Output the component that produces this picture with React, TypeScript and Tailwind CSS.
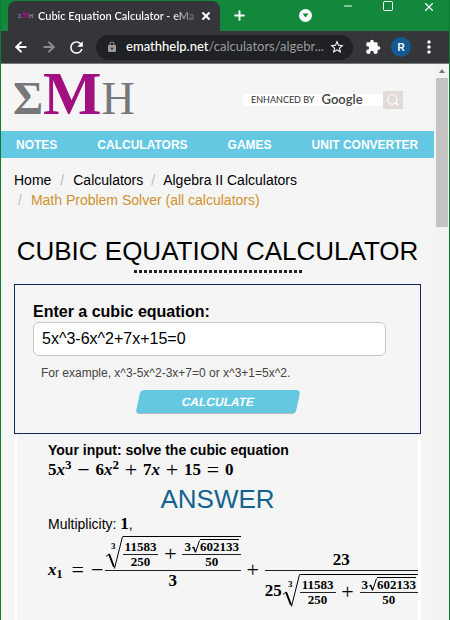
import { type ReactNode } from "react";
import { ArrowLeft, ArrowRight, Minus, Plus, Search, Square, X } from "lucide-react";
import { MdExtension, MdLock, MdMoreVert, MdRefresh, MdStarBorder } from "react-icons/md";

const NAV_LINKS = ["NOTES", "CALCULATORS", "GAMES", "UNIT CONVERTER"];

function TabStrip() {
  return (
    <div className="flex h-[31px] bg-[#13883d] pl-[7px] text-white">
      <div className="mt-px flex w-[212px] items-center rounded-t-lg bg-[#35363a] pl-[10px] pr-2">
        <span className="w-5 font-['Liberation_Serif'] text-[6px] text-gray-400">
          Σ<b className="text-[8px] text-[#a3107e]">M</b>H
        </span>
        <span className="flex-1 whitespace-nowrap bg-linear-to-r from-white from-85% to-[#55565a] bg-clip-text font-['Lato'] text-[11px] font-semibold text-transparent">
          Cubic Equation Calculator - eMa
        </span>
        <button aria-label="Close tab" className="ml-1">
          <X size={12} strokeWidth={4} />
        </button>
      </div>
      <button aria-label="New tab" className="ml-3">
        <Plus size={15} strokeWidth={3} />
      </button>
      <div className="ml-auto flex items-start gap-7">
        <button aria-label="Search tabs" className="mt-[9px] mr-[2px]">
          <svg width="13" height="13" viewBox="0 0 13 13">
            <circle cx="6.5" cy="6.5" r="6.5" fill="white" />
            <path d="M3.5 4.5h6l-3 4z" fill="#13883d" />
          </svg>
        </button>
        <button aria-label="Minimize">
          <Minus size={12} strokeWidth={2} />
        </button>
        <button aria-label="Maximize">
          <Square size={12} strokeWidth={2} />
        </button>
        <button aria-label="Close window" className="mr-[13px]">
          <X size={14} strokeWidth={2} />
        </button>
      </div>
    </div>
  );
}

function Toolbar() {
  return (
    <div className="flex h-[33px] items-center border-b border-[#77777b] bg-[#35363a] pl-3 text-white">
      <button aria-label="Back">
        <ArrowLeft size={16} strokeWidth={3} />
      </button>
      <button aria-label="Forward" className="ml-3 text-[#8c8d90]">
        <ArrowRight size={16} strokeWidth={3} />
      </button>
      <button aria-label="Reload" className="ml-[10px]">
        <MdRefresh size={19} />
      </button>
      <div className="ml-[10px] flex h-[25px] min-w-0 flex-1 items-center rounded-full bg-[#202124] pl-[10px] pr-2">
        <MdLock size={12} className="shrink-0 text-[#9a9b9e]" />
        <span className="ml-2 flex-1 whitespace-nowrap font-['Lato'] text-[13px] text-[#9a9b9e]">
          <span className="font-medium text-white">emathhelp.net</span>/calculators/algebr...
        </span>
        <button aria-label="Bookmark">
          <MdStarBorder size={16} />
        </button>
      </div>
      <button aria-label="Extensions" className="ml-3">
        <MdExtension size={16} />
      </button>
      <button
        aria-label="Profile"
        className="ml-[10px] size-5 rounded-full bg-[#14598f] font-['Liberation_Sans'] text-[10px] font-bold"
      >
        R
      </button>
      <button aria-label="Menu" className="ml-2 mr-[10px]">
        <MdMoreVert size={20} />
      </button>
    </div>
  );
}

function Scrollbar() {
  return (
    <div className="flex w-[15px] flex-col items-center bg-[#f3f3f3]">
      <svg width="8" height="14" viewBox="0 0 8 14">
        <path d="M1 9h6l-3-4z" fill="#777" />
      </svg>
      <div className="h-[149px] w-[12px] bg-[#c4c3c2]" />
    </div>
  );
}

function SiteHeader() {
  return (
    <header>
      <div className="flex h-[67px] items-center justify-between pl-3 pr-[31px]">
        <a href="#" className="flex items-baseline pb-[10px] font-['Liberation_Serif'] text-[#77777c]">
          <b className="text-[46px] leading-none">Σ</b>
          <b className="text-[62px] leading-none text-[#a01080]">M</b>
          <span className="text-[46px] leading-none">H</span>
        </a>
        <form className="mt-1 flex items-center font-['Lato']">
          <label
            htmlFor="site-search"
            className="flex h-3 w-[140px] items-center gap-[7px] bg-white pl-2 text-[9px] text-[#333]"
          >
            ENHANCED BY <span className="text-[13px] font-semibold text-[#444]">Google</span>
          </label>
          <button
            id="site-search"
            type="button"
            aria-label="Search"
            className="flex h-[18px] w-5 items-center justify-center bg-[#e2dbd7] text-white"
          >
            <Search size={14} strokeWidth={2} />
          </button>
        </form>
      </div>
      <nav className="flex h-[27px] items-center gap-10 whitespace-nowrap bg-[#64c8e3] px-[15px] text-xs font-bold text-white">
        {NAV_LINKS.map((label) => (
          <a key={label} href="#">
            {label}
          </a>
        ))}
      </nav>
    </header>
  );
}

function Breadcrumbs() {
  return (
    <nav className="mt-3 flex flex-wrap text-sm leading-[20px]">
      <a href="#">Home</a>
      <span className="px-[9px] text-[#bbb]">/</span>
      <a href="#">Calculators</a>
      <span className="px-2 text-[#bbb]">/</span>
      <a href="#">Algebra II Calculators</a>
      <span className="basis-full" />
      <span className="pl-1 pr-[9px] text-[#bbb]">/</span>
      <a href="#" className="text-[#cf922f]">
        Math Problem Solver (all calculators)
      </a>
    </nav>
  );
}

function CalculatorForm() {
  return (
    <form className="mt-[11px] h-[150px] border border-[#14285a] px-[18px] pt-[17px]">
      <label htmlFor="equation" className="block text-base leading-[20px] font-bold">
        Enter a cubic equation:
      </label>
      <input
        id="equation"
        defaultValue="5x^3-6x^2+7x+15=0"
        className="block h-[34px] w-[353px] max-w-full rounded-md border border-[#cfc5c2] bg-white px-2 text-base"
      />
      <p className="mt-2 pl-2 text-xs leading-[18px] text-[#444]">For example, x^3-5x^2-3x+7=0 or x^3+1=5x^2.</p>
      <button
        type="button"
        className="mx-auto mt-2 block h-6 w-[160px] -skew-x-12 rounded-sm border-b border-[#b9b9b9] bg-[#64c8e3] text-xs font-bold text-white"
      >
        CALCULATE
      </button>
    </form>
  );
}

/* Both halves are equally tall, so a centred row lines up every bar. */
function Fraction({ top, bottom, small = false }: { top: ReactNode; bottom: ReactNode; small?: boolean }) {
  const half = small ? "h-[15px] px-[2px] text-[13px] leading-[14px]" : "h-[36px] leading-[20px]";
  return (
    <span className="inline-flex flex-col">
      <span className={`flex items-end justify-center ${half}`}>{top}</span>
      <span className={`flex items-start justify-center border-t border-[#222] ${half}`}>{bottom}</span>
    </span>
  );
}

function Operator({ children }: { children: ReactNode }) {
  return <span className="w-6 text-center text-[22px] leading-none font-normal">{children}</span>;
}

function CubeRoot({ children }: { children: ReactNode }) {
  return (
    <span className="flex">
      <svg width="18" height="34" viewBox="0 0 18 34" fill="none" stroke="black">
        <path d="M1 20.5L4 18" />
        <path d="M4 18L9 31" strokeWidth="2" />
        <path d="M9.500 32.500L17.500 0.500" />
        <text x="6" y="13" fontSize="9" fontWeight="bold" fontFamily="Liberation Serif" fill="black" stroke="none">
          3
        </text>
      </svg>
      <span className="flex items-center border-t border-black">{children}</span>
    </span>
  );
}

function Radicand() {
  return (
    <CubeRoot>
      <Fraction small top="11583" bottom="250" />
      <Operator>+</Operator>
      <Fraction
        small
        top={
          <>
            3
            <svg width="9" height="14" viewBox="0 0 9 14" fill="none" stroke="black">
              <path d="M1 8l1.500-1" />
              <path d="M2.500 7L4.500 12" strokeWidth="1.500" />
              <path d="M4.500 12.500L8.500 0.500" />
            </svg>
            <span className="border-t border-black">602133</span>
          </>
        }
        bottom="50"
      />
    </CubeRoot>
  );
}

function Power({ coefficient, exponent }: { coefficient: string; exponent?: string }) {
  return (
    <span>
      {coefficient}
      <i>x</i>
      {exponent && <sup className="text-[13px]">{exponent}</sup>}
    </span>
  );
}

function Results() {
  return (
    <section className="mt-[2px] flex-1 border-x-3 border-white pl-[31px] pt-1 text-sm leading-[20px]">
      <h2 className="font-bold">Your input: solve the cubic equation</h2>
      <div className="flex h-5 items-center font-['Liberation_Serif'] text-[17px] font-bold">
        <Power coefficient="5" exponent="3" />
        <Operator>−</Operator>
        <Power coefficient="6" exponent="2" />
        <Operator>+</Operator>
        <Power coefficient="7" />
        <Operator>+</Operator>
        <span>15</span>
        <Operator>=</Operator>
        <span>0</span>
      </div>
      <h2 className="mt-1 pr-[31px] text-center text-[26px] leading-[30px] text-[#14628f]">ANSWER</h2>
      <p>
        Multiplicity: <b className="font-['Liberation_Serif'] text-[17px]">1</b>,
      </p>
      <div className="flex items-center whitespace-nowrap font-['Liberation_Serif'] text-[17px] font-bold">
        <span className="w-[18px]">
          <i>x</i>
          <sub className="text-[12px]">1</sub>
        </span>
        <Operator>=</Operator>
        <span className="w-[15px] text-center text-[22px] leading-none font-normal">−</span>
        <Fraction top={<Radicand />} bottom="3" />
        <Operator>+</Operator>
        <Fraction
          top="23"
          bottom={
            <span className="flex items-center pt-[3px]">
              25
              <Radicand />
            </span>
          }
        />
      </div>
    </section>
  );
}

export default function App() {
  return (
    <div className="flex min-h-screen flex-col border-x border-[#0f7a34] bg-[#f5f5f5] font-['Liberation_Sans'] text-black">
      <TabStrip />
      <Toolbar />
      <div className="flex flex-1">
        <div className="flex min-w-0 flex-1 flex-col">
          <SiteHeader />
          <main className="flex flex-1 flex-col px-[13px]">
            <Breadcrumbs />
            <h1 className="mt-[25px] whitespace-nowrap text-center text-[26px] leading-[32px]">
              CUBIC EQUATION CALCULATOR
            </h1>
            <div className="mx-auto mt-[3px] h-[3px] w-[168px] bg-[repeating-linear-gradient(to_right,#222_0_3px,transparent_3px_5px)]" />
            <CalculatorForm />
            <Results />
          </main>
        </div>
        <Scrollbar />
      </div>
    </div>
  );
}
